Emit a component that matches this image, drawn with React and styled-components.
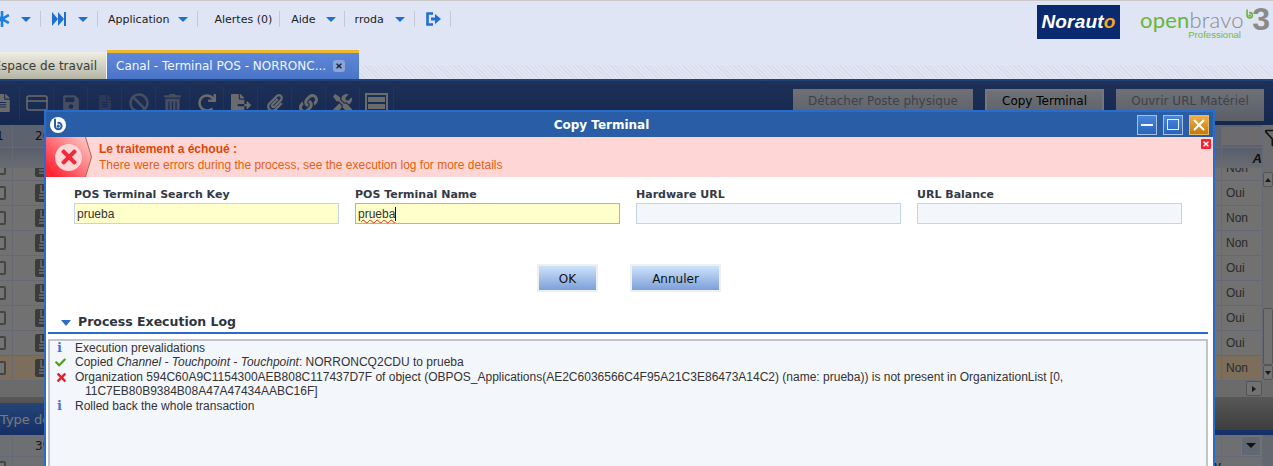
import React from "react";
import styled, { createGlobalStyle } from "styled-components";
import {
	FaAsterisk,
	FaBan,
	FaCheck,
	FaFileAlt,
	FaFileExport,
	FaLink,
	FaPaperclip,
	FaRedo,
	FaSave,
	FaTimes,
	FaTools,
	FaTrashAlt,
} from "react-icons/fa";
import { CreditCard, Filter, X } from "lucide-react";

const GlobalStyle = createGlobalStyle`
	html, body {
		margin: 0;
		padding: 0;
		width: 1273px;
		height: 466px;
		overflow: hidden;
		background: #dfe5f4;
	}
	* {
		box-sizing: border-box;
	}
`;

const UI = `"DejaVu Sans", sans-serif`;
const ARIAL = `"Liberation Sans", sans-serif`;

const Page = styled.div`
	width: 1273px;
	height: 466px;
	overflow: hidden;
	display: flex;
	flex-direction: column;
	font-family: ${UI};
	background: #dfe5f4;
`;

/* ---------- top navigation ---------- */

const NavBar = styled.div`
	height: 50px;
	flex: none;
	border-top: 1px solid #c9c9c9;
	display: flex;
	justify-content: space-between;
`;

const NavLeft = styled.div`
	display: flex;
	align-items: flex-start;
	padding-top: 10px;
	margin-left: -7px;
`;

const NavGroup = styled.div`
	height: 16px;
	display: flex;
	align-items: center;
	gap: ${(p) => p.$gap || 11}px;
	padding: 0 ${(p) => p.$right || 9}px 0 ${(p) => p.$left || 11}px;
	border-right: 1px solid #c4c9d6;
	font-size: 11px;
	color: #1c1c1c;
`;

const Caret = styled.span`
	width: 0;
	height: 0;
	border-left: 5px solid transparent;
	border-right: 5px solid transparent;
	border-top: 5px solid #1f6fd2;
`;

const Logos = styled.div`
	display: flex;
	align-items: flex-start;
	padding: 4px 3px 0 0;
`;

const NorautoLogo = styled.div`
	width: 83px;
	height: 34px;
	background: #0a2a70;
	color: #fff;
	font-family: ${ARIAL};
	font-weight: 700;
	font-style: italic;
	font-size: 19px;
	display: flex;
	align-items: center;
	justify-content: center;
	letter-spacing: 0.2px;

	b {
		color: #f5a623;
	}
`;

const BravoLogo = styled.div`
	width: 130px;
	margin-left: 20px;
	display: flex;
	position: relative;
`;

const BravoWords = styled.div`
	width: 103px;
`;

const BravoText = styled.div`
	padding-top: 3px;
	font-family: "Lato", sans-serif;
	font-size: 22px;
	line-height: 24px;
	font-weight: 300;
	letter-spacing: 0.2px;
	color: #8a8a8a;

	b {
		font-weight: 400;
		color: #69b53c;
	}
`;

const BravoSub = styled.div`
	margin-top: -1px;
	font-family: ${ARIAL};
	font-size: 9.6px;
	line-height: 8px;
	color: #74bb47;
	text-align: right;
	padding-right: 2px;
`;

const BravoThree = styled.span`
	position: absolute;
	right: 0;
	top: -4px;
	font-family: ${ARIAL};
	font-weight: 700;
	font-size: 32px;
	color: #8a8a8a;
`;

const SwirlSpot = styled.span`
	position: absolute;
	left: 103px;
	top: 3px;
	display: flex;
`;

/* ---------- tabs ---------- */

const TabRow = styled.div`
	height: 29px;
	flex: none;
	display: flex;
	align-items: flex-end;
	background:
		repeating-linear-gradient(45deg, #d8dce6 0 1px, transparent 1px 3px) 0 15px / 100% 14px no-repeat;
`;

const PlainTab = styled.div`
	width: 107px;
	height: 27px;
	display: flex;
	align-items: center;
	justify-content: flex-end;
	padding-right: 9px;
	font-size: 12px;
	color: #3c3c36;
	white-space: nowrap;
	overflow: hidden;
	background: linear-gradient(#efeee2, #b5b5a6);
	border-right: 1px solid #f2f2f2;
`;

const ActiveTab = styled.div`
	width: 252px;
	height: 29px;
	display: flex;
	align-items: center;
	gap: 7px;
	padding-left: 9px;
	font-size: 12px;
	color: #f3f6ff;
	white-space: nowrap;
	border-top: 3px solid #efb92f;
	background: linear-gradient(#6088da, #4a74c6);
`;

const TabClose = styled.span`
	width: 12px;
	height: 12px;
	border-radius: 3px;
	background: #8da4d8;
	color: #1a2540;
	display: flex;
	align-items: center;
	justify-content: center;
`;

/* ---------- workspace under the mask ---------- */

const Workspace = styled.div`
	flex: 1;
	position: relative;
	overflow: hidden;
	display: flex;
	flex-direction: column;
	background: #e4e4e4;
`;

const Toolbar = styled.div`
	height: 46px;
	flex: none;
	display: flex;
	align-items: flex-start;
	justify-content: space-between;
	padding-top: 8px;
	border-top: 2px solid #3c86f0;
	background: linear-gradient(#3c60b0, #2a509e);
`;

const ToolIcons = styled.div`
	display: flex;
	margin-left: -14px;
`;

const ToolIcon = styled.div`
	width: 34px;
	height: 34px;
	margin-top: -3px;
	display: flex;
	align-items: center;
	justify-content: center;
	color: ${(p) => (p.$faint ? "#5d75aa" : p.$off ? "#8c9cc0" : "#d6d6d6")};
	border-right: 1px solid #4668b4;
`;

const ToolButtons = styled.div`
	display: flex;
	gap: 12px;
	padding-right: 9px;
`;

const ToolButton = styled.div`
	width: ${(p) => p.$w}px;
	height: 32px;
	padding-bottom: 8px;
	display: flex;
	align-items: center;
	justify-content: center;
	font-size: 12px;
	color: ${(p) => (p.$on ? "#000" : "#7f8493")};
	background: linear-gradient(#dee2ea, #b4bdd2);
	border: ${(p) => (p.$on ? "2px solid #eceef2" : "none")};
`;

const GridArea = styled.div`
	height: 256px;
	flex: none;
	display: flex;
`;

const GridMain = styled.div`
	flex: 1;
	display: flex;
	flex-direction: column;
	min-width: 0;
`;

const Cols = styled.div`
	display: grid;
	grid-template-columns: 13px 1fr 41px;
	flex: none;
`;

const FilterRow = styled(Cols)`
	height: 22px;
	background: #b9c6dc;
	font-size: 12px;
	color: #222;
`;

const HeadRow = styled(Cols)`
	height: 21px;
	background: linear-gradient(#b0bfd8, #d3d8e2);
	border-top: 1px solid #cdd5e4;
`;

const Cell = styled.div`
	display: flex;
	align-items: center;
	overflow: hidden;
	white-space: nowrap;
	padding-left: ${(p) => p.$pad || 0}px;
	justify-content: ${(p) => (p.$end ? "flex-end" : "flex-start")};
	border-right: 1px solid #c8d2e6;
`;

const ClippedNumber = styled.span`
	margin-left: -4px;
`;

const HeadLetter = styled.span`
	font-family: ${ARIAL};
	font-weight: 700;
	font-style: italic;
	font-size: 13px;
	color: #222;
`;

const FilterBox = styled.div`
	width: 100%;
	height: 18px;
	background: #d8d8dc;
`;

const Rows = styled.div`
	height: 213px;
	overflow: hidden;
`;

const Row = styled(Cols)`
	height: 25px;
	margin-top: ${(p) => (p.$clipped ? -12 : 0)}px;
	background: ${(p) => (p.$selected ? "#fbdcb8" : "#e2e2e2")};
	border-bottom: 1px solid #c8d2e6;
	font-family: ${ARIAL};
	font-size: 12px;
	color: #555;
`;

const Checkbox = styled.span`
	width: 14px;
	height: 14px;
	flex: none;
	margin-left: -8px;
	border: 2px solid #8a8a8a;
	background: #e8e8e8;
	border-radius: 2px;
`;

const DocIcon = styled.svg`
	width: 11px;
	height: 18px;
	flex: none;
`;

const VScroll = styled.div`
	width: 10px;
	flex: none;
	display: flex;
	flex-direction: column;
	padding-bottom: 1px;
	background: #dcdcdc;
`;

const FilterCorner = styled.div`
	height: 47px;
	flex: none;
	padding: 3px 0 0 1px;
	background: #d8dae0;
	color: #222;
	overflow: hidden;
`;

const ScrollBtn = styled.div`
	height: 15px;
	flex: none;
	display: flex;
	align-items: center;
	justify-content: center;
	background: #e6e6e6;
	border: 1px solid #aaa;
	border-radius: 2px;

	&::before {
		content: "";
		border-left: 3px solid transparent;
		border-right: 3px solid transparent;
		border-${(p) => (p.$up ? "bottom" : "top")}: 4px solid #333;
	}
`;

const ScrollTrack = styled.div`
	flex: 1;
`;

const ScrollThumb = styled.div`
	height: 57px;
	flex: none;
	background: #e2e2e2;
	border: 1px solid #aaa;
	border-radius: 2px;
`;

const GridFooter = styled.div`
	height: 16px;
	flex: none;
	display: flex;
	justify-content: flex-end;
	padding-right: 11px;
	background: #d6d6d6;
`;

const HScrollBtn = styled.div`
	width: 16px;
	height: 15px;
	background: #e4e4e4;
	border: 1px solid #aaa;
	border-radius: 2px;
	display: flex;
	align-items: center;
	justify-content: center;

	&::before {
		content: "";
		border-top: 3px solid transparent;
		border-bottom: 3px solid transparent;
		border-left: 4px solid #333;
	}
`;

const SubBar = styled.div`
	height: 38px;
	flex: none;
	display: flex;
	align-items: flex-end;
	background: linear-gradient(#b0b0b0, #747474);
`;

const SubTab = styled.div`
	width: 200px;
	height: 32px;
	flex: none;
	display: flex;
	align-items: center;
	font-size: 13px;
	color: #f0f2f8;
	white-space: nowrap;
	background: linear-gradient(#4a88e8, #2c60d0);
`;

const SubFill = styled.div`
	flex: 1;
	height: 5px;
	background: #2c60d0;
`;

const SubRow = styled(Cols)`
	height: 22px;
	padding-right: 10px;
	background: #c4cfe0;
	font-size: 12px;
	color: #333;
`;

const SubCell = styled(Cell)`
	background: #dcdfe5;
	border-bottom: 1px solid #c8d2e6;
`;

const SelectBox = styled.div`
	height: 20px;
	width: 20px;
	margin-left: 19px;
	background: #c5d0e2;
	border: 1px solid #e8e8e8;
	display: flex;
	align-items: center;
	justify-content: center;

	&::before {
		content: "";
		border-left: 5px solid transparent;
		border-right: 5px solid transparent;
		border-top: 5px solid #222;
	}
`;

const Mask = styled.div`
	position: absolute;
	inset: 0;
	background: rgba(0, 0, 0, 0.5);
`;

/* ---------- dialog ---------- */

const Dialog = styled.div`
	position: absolute;
	left: 44px;
	top: 31px;
	width: 1171px;
	height: 360px;
	display: flex;
	flex-direction: column;
	background: #fff;
	border: 2px solid #2a6ccc;
	border-bottom: none;
`;

const DialogHead = styled.div`
	height: 25px;
	flex: none;
	display: grid;
	grid-template-columns: 1fr auto 1fr;
	align-items: center;
	background: #295ea6;
	padding: 0 4px;
`;

const DialogTitle = styled.div`
	margin-right: 56px;
	font-weight: 700;
	font-size: 12px;
	color: #fff;
`;

const WinButtons = styled.div`
	display: flex;
	justify-content: flex-end;
	gap: 6px;
`;

const WinButton = styled.div`
	width: 20px;
	height: 20px;
	display: flex;
	align-items: center;
	justify-content: center;
	border: 1px solid ${(p) => (p.$close ? "#e8b95c" : "#a8c0e0")};
	background: ${(p) =>
		p.$close ? "linear-gradient(#eeb04a, #c27a12)" : "linear-gradient(#4a86da, #2a62bc)"};
`;

const MinBar = styled.span`
	width: 12px;
	height: 2px;
	background: #f2f6fc;
`;

const MaxBox = styled.span`
	width: 12px;
	height: 11px;
	border: 1px solid #eaf1fb;
`;

const Message = styled.div`
	height: 40px;
	flex: none;
	position: relative;
	display: flex;
	background: #ffd6d6;
	font-family: ${ARIAL};
	font-size: 12px;
`;

const MessageEdge = styled.div`
	width: 46px;
	flex: none;
	clip-path: polygon(0 0, 40px 0, 46px 50%, 40px 100%, 0 100%);
	background: #a06a50;
`;

const MessageIcon = styled.div`
	height: 100%;
	display: flex;
	align-items: center;
	padding-left: 9px;
	clip-path: polygon(0 0, 39px 0, 45px 50%, 39px 100%, 0 100%);
	background: linear-gradient(45deg, #ff2334 10%, #ffb8b8 85%);
`;

const ErrorDisc = styled.div`
	width: 27px;
	height: 27px;
	border-radius: 50%;
	background: #ffd6d6;
	color: #ee2b3a;
	display: flex;
	align-items: center;
	justify-content: center;
`;

const MessageBody = styled.div`
	padding: 4px 0 0 7px;
	line-height: 16px;
`;

const MessageTitle = styled.div`
	font-weight: 700;
	color: #d8490a;
`;

const MessageText = styled.div`
	color: #e5600f;
`;

const MessageClose = styled.div`
	position: absolute;
	right: 2px;
	top: 2px;
	width: 10px;
	height: 10px;
	border-radius: 1px;
	background: #f5222f;
	color: #fff;
	display: flex;
	align-items: center;
	justify-content: center;
`;

const Form = styled.div`
	display: grid;
	grid-template-columns: repeat(4, 265px);
	column-gap: 16px;
	padding: 10px 0 0 28px;
	flex: none;
`;

const Label = styled.div`
	height: 16px;
	font-weight: 700;
	font-size: 11px;
	line-height: 16px;
	color: #333a45;
`;

const Input = styled.div`
	height: 21px;
	padding: 1px 0 0 2px;
	display: flex;
	align-items: center;
	font-family: ${ARIAL};
	font-size: 12px;
	color: #333;
	border: 1px solid ${(p) => (p.$focus ? "#e3b23c" : "#c3d3e8")};
	background: ${(p) => (p.$required ? "#ffffcc" : "#f3f6fb")};
`;

const Typed = styled.span`
	text-decoration: underline wavy #e0261c 1px;
	border-right: 1px solid #111;
`;

const Actions = styled.div`
	display: flex;
	justify-content: center;
	gap: 32px;
	margin-top: 40px;
	padding-right: 2px;
	flex: none;
`;

const Button = styled.div`
	width: ${(p) => p.$w}px;
	height: 28px;
	padding: 1px 0 0 1px;
	display: flex;
	align-items: center;
	justify-content: center;
	font-size: 12px;
	color: #111;
	border: 2px solid #efefef;
	background: linear-gradient(#cfe2fb, #7ba0d8);
`;

const SectionHead = styled.div`
	height: 21px;
	margin: 21px 5px 0 2px;
	flex: none;
	display: flex;
	align-items: center;
	gap: 7px;
	padding: 0 0 2px 13px;
	font-weight: 700;
	font-size: 12.5px;
	color: #2f3540;
	border-bottom: 2px solid #2a6ccc;
`;

const SectionCaret = styled.span`
	border-left: 5px solid transparent;
	border-right: 5px solid transparent;
	border-top: 6px solid #2a6ccc;
	margin-top: 2px;
`;

const LogBox = styled.div`
	flex: 1;
	margin: 5px 5px 0 2px;
	padding: 0 0 0 5px;
	border: 2px solid #c0c5cc;
	background: #f3f6fb;
	font-family: ${ARIAL};
	font-size: 12px;
	color: #333;
`;

const LogLine = styled.div`
	display: flex;
	line-height: 14.4px;
`;

const LogIcon = styled.span`
	width: 20px;
	flex: none;
	display: flex;
	align-items: center;
	height: 14.4px;
	color: ${(p) => p.$color};
`;

const InfoGlyph = styled.span`
	font-family: "DejaVu Serif", serif;
	font-weight: 700;
	font-size: 13px;
	padding-left: 2px;
`;

const LogText = styled.div`
	flex: 1;
	padding-left: 10px;
	text-indent: -10px;
	padding-right: 130px;
`;

const Swirl = ({ size, disc, ink }) => (
	<svg width={size} height={size} viewBox="0 0 16 16">
		{disc && <circle cx="8" cy="8" r="8" fill={disc} />}
		<path
			d="M5 2.5 V9 a3.3 3.3 0 1 0 3.3 -3.3 M8.2 8.6 a0.6 0.6 0 1 0 0.1 0"
			fill="none"
			stroke={ink}
			strokeWidth="2"
			strokeLinecap="round"
		/>
	</svg>
);

const GRID_VALUES = ["Non", "Oui", "Non", "Non", "Oui", "Oui", "Oui", "Oui", "Non"];

const TableIcon = () => (
	<svg width="23" height="20" viewBox="0 0 23 20">
		<rect x="1" y="1" width="21" height="18" fill="none" stroke="currentColor" strokeWidth="2" />
		<rect x="3" y="4" width="17" height="5" fill="currentColor" />
		<rect x="3" y="11" width="17" height="5" fill="currentColor" />
	</svg>
);

const GridDoc = () => (
	<DocIcon viewBox="0 0 11 18">
		<path d="M2 0 H11 V18 H2 Q0 18 0 16 V2 Q0 0 2 0 Z" fill="#777" />
		<path d="M6 1 V8 H11 M4 11 H11 M4 14 H11" fill="none" stroke="#e2e2e2" strokeWidth="1.4" />
	</DocIcon>
);

const App = () => {
	return (
		<Page>
			<GlobalStyle />
			<NavBar>
				<NavLeft>
					<NavGroup $left={1}>
						<FaAsterisk size={16} color="#1f7fe0" />
						<Caret />
					</NavGroup>
					<NavGroup $gap={12}>
						<svg width="14" height="14" viewBox="0 0 14 14">
							<path d="M0 0 L6 7 L0 14 Z M6 0 L12 7 L6 14 Z" fill="#1f6fd2" />
							<rect x="12" y="0" width="2" height="14" fill="#1f6fd2" />
						</svg>
						<Caret />
					</NavGroup>
					<NavGroup $left={10} $gap={9}>
						Application
						<Caret />
					</NavGroup>
					<NavGroup $left={16} $right={7}>
						Alertes (0)
					</NavGroup>
					<NavGroup $gap={10} $right={8}>
						Aide
						<Caret />
					</NavGroup>
					<NavGroup $left={10}>
						rroda
						<Caret />
					</NavGroup>
					<NavGroup>
						<svg width="15" height="14" viewBox="0 0 15 14">
							<path d="M7 1.5 H1.5 V12.5 H7" fill="none" stroke="#1f6fd2" strokeWidth="2.6" />
							<path d="M5 5.5 H9 V2 L15 7 L9 12 V8.5 H5 Z" fill="#1f6fd2" />
						</svg>
					</NavGroup>
				</NavLeft>
				<Logos>
					<NorautoLogo>
						Noraut<b>o</b>
					</NorautoLogo>
					<BravoLogo>
						<BravoWords>
							<BravoText>
								<b>open</b>bravo
							</BravoText>
							<BravoSub>Professional</BravoSub>
						</BravoWords>
						<SwirlSpot>
							<Swirl size={13} ink="#69b53c" />
						</SwirlSpot>
						<BravoThree>3</BravoThree>
					</BravoLogo>
				</Logos>
			</NavBar>

			<TabRow>
				<PlainTab>Espace de travail</PlainTab>
				<ActiveTab>
					Canal - Terminal POS - NORRONC...
					<TabClose>
						<FaTimes size={8} />
					</TabClose>
				</ActiveTab>
			</TabRow>

			<Workspace>
				<Toolbar>
					<ToolIcons>
						<ToolIcon>
							<FaFileAlt size={18} />
						</ToolIcon>
						<ToolIcon>
							<CreditCard size={24} strokeWidth={1.5} />
						</ToolIcon>
						<ToolIcon $off>
							<FaSave size={18} />
						</ToolIcon>
						<ToolIcon $faint>
							<FaFileAlt size={16} />
						</ToolIcon>
						<ToolIcon $off>
							<FaBan size={20} />
						</ToolIcon>
						<ToolIcon $off>
							<FaTrashAlt size={19} />
						</ToolIcon>
						<ToolIcon>
							<FaRedo size={18} />
						</ToolIcon>
						<ToolIcon>
							<FaFileExport size={20} />
						</ToolIcon>
						<ToolIcon>
							<FaPaperclip size={18} />
						</ToolIcon>
						<ToolIcon>
							<FaLink size={19} />
						</ToolIcon>
						<ToolIcon>
							<FaTools size={19} />
						</ToolIcon>
						<ToolIcon>
							<TableIcon />
						</ToolIcon>
					</ToolIcons>
					<ToolButtons>
						<ToolButton $w={180}>Détacher Poste physique</ToolButton>
						<ToolButton $w={119} $on>
							Copy Terminal
						</ToolButton>
						<ToolButton $w={148}>Ouvrir URL Matériel</ToolButton>
					</ToolButtons>
				</Toolbar>

				<GridArea>
					<GridMain>
						<FilterRow>
							<Cell>
								<ClippedNumber>1</ClippedNumber>
							</Cell>
							<Cell $pad={22}>26</Cell>
							<Cell>
								<FilterBox />
							</Cell>
						</FilterRow>
						<HeadRow>
							<Cell />
							<Cell />
							<Cell $end>
								<HeadLetter>A</HeadLetter>
							</Cell>
						</HeadRow>
						<Rows>
							{GRID_VALUES.map((value, i) => (
								<Row key={i} $clipped={i === 0} $selected={i === GRID_VALUES.length - 1}>
									<Cell>
										<Checkbox />
									</Cell>
									<Cell $pad={22}>
										<GridDoc />
									</Cell>
									<Cell $pad={4}>{value}</Cell>
								</Row>
							))}
						</Rows>
					</GridMain>
					<VScroll>
						<FilterCorner>
							<Filter size={20} strokeWidth={2} />
						</FilterCorner>
						<ScrollBtn $up />
						<ScrollTrack />
						<ScrollThumb />
						<ScrollBtn />
					</VScroll>
				</GridArea>
				<GridFooter>
					<HScrollBtn />
				</GridFooter>
				<SubBar>
					<SubTab>Type de terminal</SubTab>
					<SubFill />
				</SubBar>
				<SubRow>
					<SubCell />
					<SubCell $pad={22}>39</SubCell>
					<SubCell>
						<SelectBox />
					</SubCell>
				</SubRow>
				<SubRow>
					<SubCell>
						<Checkbox />
					</SubCell>
					<SubCell $end>W</SubCell>
					<SubCell />
				</SubRow>
				<Mask />

				<Dialog>
					<DialogHead>
						<Swirl size={16} disc="#fff" ink="#295ea6" />
						<DialogTitle>Copy Terminal</DialogTitle>
						<WinButtons>
							<WinButton>
								<MinBar />
							</WinButton>
							<WinButton>
								<MaxBox />
							</WinButton>
							<WinButton $close>
								<X size={20} strokeWidth={2.6} color="#fff" />
							</WinButton>
						</WinButtons>
					</DialogHead>

					<Message>
						<MessageEdge>
							<MessageIcon>
								<ErrorDisc>
									<FaTimes size={22} />
								</ErrorDisc>
							</MessageIcon>
						</MessageEdge>
						<MessageBody>
							<MessageTitle>Le traitement a échoué :</MessageTitle>
							<MessageText>There were errors during the process, see the execution log for more details</MessageText>
						</MessageBody>
						<MessageClose>
							<FaTimes size={8} />
						</MessageClose>
					</Message>

					<Form>
						<Label>POS Terminal Search Key</Label>
						<Label>POS Terminal Name</Label>
						<Label>Hardware URL</Label>
						<Label>URL Balance</Label>
						<Input $required>prueba</Input>
						<Input $required $focus>
							<Typed>prueba</Typed>
						</Input>
						<Input />
						<Input />
					</Form>

					<Actions>
						<Button $w={61}>OK</Button>
						<Button $w={91}>Annuler</Button>
					</Actions>

					<SectionHead>
						<SectionCaret />
						Process Execution Log
					</SectionHead>

					<LogBox>
						<LogLine>
							<LogIcon $color="#4a72d8">
								<InfoGlyph>i</InfoGlyph>
							</LogIcon>
							<LogText>Execution prevalidations</LogText>
						</LogLine>
						<LogLine>
							<LogIcon $color="#4f9e1e">
								<FaCheck size={11} />
							</LogIcon>
							<LogText>
								Copied <em>Channel - Touchpoint - Touchpoint</em>: NORRONCQ2CDU to prueba
							</LogText>
						</LogLine>
						<LogLine>
							<LogIcon $color="#ee1c25">
								<FaTimes size={13} />
							</LogIcon>
							<LogText>
								Organization 594C60A9C1154300AEB808C117437D7F of object (OBPOS_Applications(AE2C6036566C4F95A21C3E86473A14C2) (name: prueba)) is not present in OrganizationList [0, 11C7EB80B9384B08A47A47434AABC16F]
							</LogText>
						</LogLine>
						<LogLine>
							<LogIcon $color="#4a72d8">
								<InfoGlyph>i</InfoGlyph>
							</LogIcon>
							<LogText>Rolled back the whole transaction</LogText>
						</LogLine>
					</LogBox>
				</Dialog>
			</Workspace>
		</Page>
	);
};

export default App;
